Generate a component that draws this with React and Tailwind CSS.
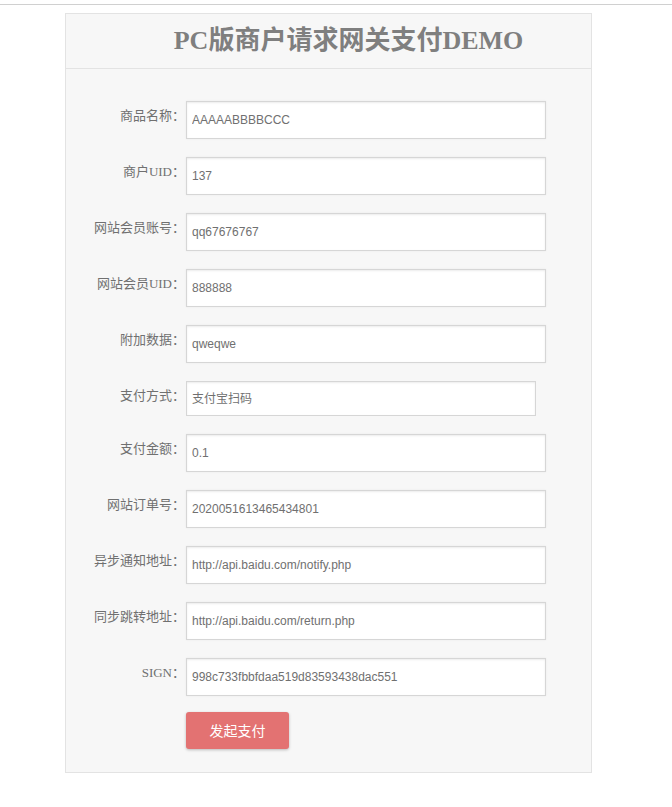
const fields = [
  { label: "商品名称：", value: "AAAAABBBBCCC" },
  { label: "商户UID：", value: "137" },
  { label: "网站会员账号：", value: "qq67676767" },
  { label: "网站会员UID：", value: "888888" },
  { label: "附加数据：", value: "qweqwe" },
  { label: "支付方式：", value: "支付宝扫码", select: true },
  { label: "支付金额：", value: "0.1" },
  { label: "网站订单号：", value: "2020051613465434801" },
  { label: "异步通知地址：", value: "http://api.baidu.com/notify.php" },
  { label: "同步跳转地址：", value: "http://api.baidu.com/return.php" },
  { label: "SIGN：", value: "998c733fbbfdaa519d83593438dac551" },
];

const labelFont = "[font-family:'Liberation_Serif','Noto_Sans_CJK_SC',serif]";

function Row({ label, value, select }) {
  return (
    <div className="flex items-start">
      <label className={`w-[119px] shrink-0 pt-[5px] text-right text-[13px] leading-5 text-[#707070] ${labelFont}`}>
        {label}
      </label>
      <div className="ml-[1px]">
        {select ? (
          <select
            defaultValue={value}
            className="block h-[35px] w-[350px] appearance-none border border-[#d6d6d6] bg-white pl-[5px] text-[12px] text-[#707070] shadow-[inset_0_1px_2px_rgba(0,0,0,0.08)] outline-none [font-family:'Liberation_Sans','Noto_Sans_CJK_SC',sans-serif]"
          >
            <option>{value}</option>
          </select>
        ) : (
          <input
            defaultValue={value}
            className="block h-[38px] w-[360px] border border-[#d6d6d6] bg-white px-[5px] text-[12px] text-[#707070] shadow-[inset_0_1px_2px_rgba(0,0,0,0.08),0_0_2px_rgba(0,0,0,0.06)] outline-none [font-family:'Liberation_Sans','Noto_Sans_CJK_SC',sans-serif]"
          />
        )}
      </div>
    </div>
  );
}

export default function App() {
  return (
    <div className="min-h-[807px] bg-white">
      <div className="h-[5px] border-b border-[#d0d0d0]" />
      <div className="ml-[65px] mt-[8px] w-[527px] border border-[#e3e3e3] bg-[#f7f7f7]">
        <div className="flex h-[55px] items-center justify-center border-b border-[#e3e3e3] pl-[40px]">
          <h1 className={`text-[26px] font-bold leading-none text-[#7f7f7f] ${labelFont}`}>
            PC版商户请求网关支付DEMO
          </h1>
        </div>
        <form className="flex flex-col gap-[18px] pb-[23px] pt-[32px]" onSubmit={(e) => e.preventDefault()}>
          {fields.map((f) => (
            <Row key={f.label} {...f} />
          ))}
          <div className="-mt-[2px] pl-[120px]">
            <button
              type="submit"
              className="h-[37px] w-[103px] rounded-[3px] bg-[#e37272] text-[14px] text-white shadow-[0_1px_3px_rgba(0,0,0,0.25)] [font-family:'Noto_Sans_CJK_SC',sans-serif]"
            >
              发起支付
            </button>
          </div>
        </form>
      </div>
    </div>
  );
}
